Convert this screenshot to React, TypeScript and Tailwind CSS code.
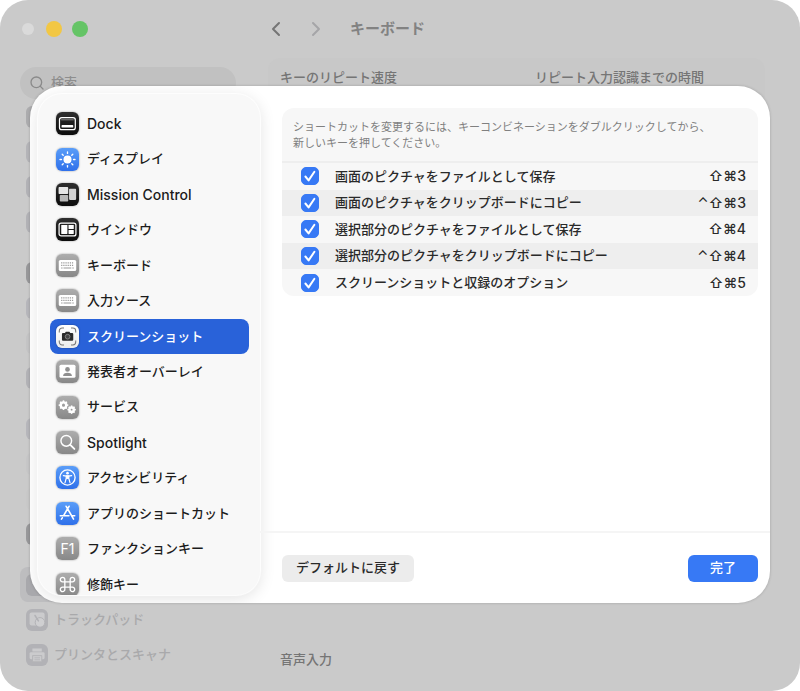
import type { ReactNode } from 'react';
import { LuChevronLeft, LuChevronRight, LuSearch } from 'react-icons/lu';

const TILE = {
  black: 'bg-linear-to-b from-[#2e2e2e] to-[#0c0c0c]',
  blue: 'bg-linear-to-b from-[#5a9df8] to-[#2f70ea]',
  gray: 'bg-linear-to-b from-[#adadad] to-[#888888]',
  white: 'bg-linear-to-b from-white to-[#ececec]',
};

const DockIcon = () => (
  <>
    <rect x="3.4" y="5.4" width="15.4" height="11.8" rx="2.2" fill="none" stroke="#fff" strokeWidth="1.2" />
    <path d="M5 7.6h12.2" stroke="#fff" strokeWidth="0.7" opacity="0.6" />
    <rect x="5.4" y="12.6" width="11.4" height="2.6" rx="0.7" fill="#fff" />
  </>
);

const SunIcon = () => (
  <>
    <circle cx="11.2" cy="11.2" r="3.9" fill="#fff" />
    {[0, 45, 90, 135, 180, 225, 270, 315].map((deg) => (
      <path key={deg} d="M11.2 5.3V3.9" stroke="#fff" strokeWidth="1.3" strokeLinecap="round" transform={`rotate(${deg} 11.2 11.2)`} />
    ))}
  </>
);

const MissionIcon = () => (
  <>
    <rect x="2.5" y="4" width="9.4" height="6.8" rx="0.8" fill="#e6e6e6" />
    <rect x="3.7" y="11.7" width="8.2" height="6.4" rx="0.8" fill="#b8b8b8" />
    <rect x="12.7" y="5.7" width="6.9" height="10.8" rx="0.8" fill="#d2d2d2" />
  </>
);

const WindowIcon = () => (
  <>
    <rect x="3" y="4.9" width="16.4" height="12.6" rx="2" fill="none" stroke="#fff" strokeWidth="1.2" />
    <rect x="5.1" y="6.9" width="6" height="8.6" rx="0.3" fill="#fff" />
    <rect x="12.2" y="6.9" width="5.1" height="3.8" rx="0.3" fill="#fff" />
    <rect x="12.2" y="11.7" width="5.1" height="3.8" rx="0.3" fill="#fff" />
  </>
);

const KeyboardIcon = () => (
  <>
    <rect x="2.7" y="5.8" width="17" height="10.8" rx="1.6" fill="#fff" />
    <path d="M5 8.6h12.4M5 11h12.4" stroke="#999" strokeWidth="1.2" strokeDasharray="1.2 0.9" />
    <path d="M5 13.6h1.4M7.3 13.6h7.6M15.9 13.6h1.4" stroke="#999" strokeWidth="1.1" />
  </>
);

const ScreenshotIcon = () => (
  <>
    <path
      d="M3.2 7.4V5.8a2.8 2.8 0 0 1 2.8-2.8h1.8M14.6 3h1.8a2.8 2.8 0 0 1 2.8 2.8v1.6M19.2 15v1.6a2.8 2.8 0 0 1-2.8 2.8h-1.8M7.8 19.4H6a2.8 2.8 0 0 1-2.8-2.8V15"
      fill="none"
      stroke="#777"
      strokeWidth="1"
    />
    <path d="M6.8 7.8h1.9l.9-1.3h3.4l.9 1.3h1.9a1 1 0 0 1 1 1v5.5a1 1 0 0 1-1 1h-9a1 1 0 0 1-1-1V8.8a1 1 0 0 1 1-1z" fill="#2a2a2a" />
    <circle cx="11.3" cy="11.4" r="2.3" fill="#444" stroke="#999" strokeWidth="0.7" />
  </>
);

const PresenterIcon = () => (
  <>
    <rect x="3.4" y="4.6" width="15.6" height="12.8" rx="1.6" fill="#fff" />
    <circle cx="11.2" cy="9.2" r="2.3" fill="#8f8f8f" />
    <path d="M6.9 15.6c0-2.2 1.8-3.2 4.3-3.2s4.3 1 4.3 3.2z" fill="#8f8f8f" />
  </>
);

const Gear = ({ cx, cy, r }: { cx: number; cy: number; r: number }) => (
  <>
    <circle cx={cx} cy={cy} r={r} fill="none" stroke="#fff" strokeWidth="2.4" />
    {[0, 45, 90, 135, 180, 225, 270, 315].map((deg) => (
      <path key={deg} d={`M${cx} ${cy - r}v-2`} stroke="#fff" strokeWidth="1.5" transform={`rotate(${deg} ${cx} ${cy})`} />
    ))}
  </>
);

const ServicesIcon = () => (
  <>
    <Gear cx={7.3} cy={8.9} r={2.7} />
    <Gear cx={15.2} cy={13.3} r={2.1} />
  </>
);

const SpotlightIcon = () => (
  <>
    <circle cx="10" cy="9.6" r="5.2" fill="none" stroke="#fff" strokeWidth="1.4" />
    <path d="M13.9 13.5l4 4" stroke="#fff" strokeWidth="1.8" strokeLinecap="round" />
  </>
);

const AccessIcon = () => (
  <>
    <circle cx="11.2" cy="11.2" r="7.4" fill="none" stroke="#fff" strokeWidth="1.3" />
    <circle cx="11.2" cy="7" r="1.3" fill="#fff" />
    <path d="M7.2 9.4l3 .5h2l3-.5" fill="none" stroke="#fff" strokeWidth="1.2" strokeLinecap="round" />
    <path d="M9.9 9.6h2.6v2.6l1.2 4.2M9.9 9.6v2.6l-1.2 4.2" fill="none" stroke="#fff" strokeWidth="1.1" strokeLinecap="round" strokeLinejoin="round" />
    <path d="M9.9 9.6h2.6v3H9.9z" fill="#fff" />
  </>
);

const AppStoreIcon = () => (
  <path
    d="M12.7 4.2L7.4 13.2M9.9 4.2l7.2 12.4M4.2 13.4h8.4M15.4 13.4h2.8M6.1 15.4l-.8 1.3"
    fill="none"
    stroke="#fff"
    strokeWidth="1.6"
    strokeLinecap="round"
  />
);

const CommandIcon = () => (
  <path
    d="M8.6 8.6H6.5a2.2 2.2 0 1 1 2.1-2.1v9.3a2.2 2.2 0 1 1-2.1-2.1h9.4a2.2 2.2 0 1 1-2.1 2.1V6.5a2.2 2.2 0 1 1 2.1 2.1z"
    fill="none"
    stroke="#fff"
    strokeWidth="1.3"
  />
);

const TrackpadIcon = () => (
  <>
    <rect x="3.6" y="3.6" width="15" height="13" rx="2" fill="#cbcbcd" />
    <circle cx="14" cy="13.4" r="4.8" fill="#cfcfd1" stroke="#b2b2b6" strokeWidth="1" />
    <path d="M9 6.5l3.4 5.4" stroke="#b2b2b6" strokeWidth="1.5" strokeLinecap="round" />
  </>
);

const PrinterIcon = () => (
  <>
    <path d="M6.4 4.6h9.4v3H6.4z" fill="#cbcbcd" />
    <rect x="3.6" y="8.2" width="15" height="7" rx="1.4" fill="#cbcbcd" />
    <path d="M6.6 11.6h9.2v6.2H6.6z" fill="#cbcbcd" stroke="#b2b2b6" strokeWidth="0.9" />
    <path d="M8.4 13.8h5.6M8.4 15.8h5.6" stroke="#b2b2b6" strokeWidth="0.8" />
  </>
);

const CATEGORIES: { name: string; tile: string; icon: ReactNode }[] = [
  { name: 'Dock', tile: TILE.black, icon: <DockIcon /> },
  { name: 'ディスプレイ', tile: TILE.blue, icon: <SunIcon /> },
  { name: 'Mission Control', tile: TILE.black, icon: <MissionIcon /> },
  { name: 'ウインドウ', tile: TILE.black, icon: <WindowIcon /> },
  { name: 'キーボード', tile: TILE.gray, icon: <KeyboardIcon /> },
  { name: '入力ソース', tile: TILE.gray, icon: <KeyboardIcon /> },
  { name: 'スクリーンショット', tile: TILE.white, icon: <ScreenshotIcon /> },
  { name: '発表者オーバーレイ', tile: TILE.gray, icon: <PresenterIcon /> },
  { name: 'サービス', tile: TILE.gray, icon: <ServicesIcon /> },
  { name: 'Spotlight', tile: TILE.gray, icon: <SpotlightIcon /> },
  { name: 'アクセシビリティ', tile: TILE.blue, icon: <AccessIcon /> },
  { name: 'アプリのショートカット', tile: TILE.blue, icon: <AppStoreIcon /> },
  { name: 'ファンクションキー', tile: TILE.gray, icon: null },
  { name: '修飾キー', tile: TILE.gray, icon: <CommandIcon /> },
];

const SHORTCUTS = [
  { id: 'save-screen', label: '画面のピクチャをファイルとして保存', keys: '⇧⌘3' },
  { id: 'copy-screen', label: '画面のピクチャをクリップボードにコピー', keys: '⌃⇧⌘3' },
  { id: 'save-area', label: '選択部分のピクチャをファイルとして保存', keys: '⇧⌘4' },
  { id: 'copy-area', label: '選択部分のピクチャをクリップボードにコピー', keys: '⌃⇧⌘4' },
  { id: 'options', label: 'スクリーンショットと収録のオプション', keys: '⇧⌘5' },
];

// dimmed icon tiles of the settings groups that sit under the dialog
const DIMMED_GROUPS = [
  ['bg-[#acacae]', 'bg-[#b4b4b8]', 'bg-[#b2b2b6]', 'bg-[#b2b2b6]'],
  ['bg-[#98989a]', 'bg-[#b6b6bb]', 'bg-[#c4c4c5]', 'bg-[#b2b2b6]'],
  ['bg-[#b6b6bb]', 'bg-[#c6c6c7]', 'bg-[#c8c8c8]', 'bg-[#98989a]'],
];

function SettingsSidebar() {
  return (
    <aside className="flex w-64 shrink-0 flex-col px-5 pt-[21px]">
      <div className="flex gap-[10px]">
        <span className="flex size-4 items-center justify-center">
          <span className="size-3 rounded-full bg-[#dadada]" />
        </span>
        <span className="size-4 rounded-full bg-[#f2c744]" />
        <span className="size-4 rounded-full bg-[#65c466]" />
      </div>
      <label className="mt-[30px] flex h-8 items-center gap-[6px] rounded-full bg-[#c1c1c1] px-[9px] text-[#8a8a8a]">
        <LuSearch className="size-4 shrink-0" />
        <input type="text" placeholder="検索" aria-label="検索" className="w-full bg-transparent text-[13px] font-medium outline-none placeholder:text-[#8e8e8e]" />
      </label>
      <div className="flex flex-col gap-4 text-[13px] font-medium text-[#a9a9ab]">
        {DIMMED_GROUPS.map((group, g) => (
          <div key={g} aria-hidden="true">
            {group.map((color, i) => (
              <div key={i} className="flex h-[35px] items-center px-[6px]">
                <span className={`size-[22px] rounded-md ${color}`} />
              </div>
            ))}
          </div>
        ))}
        <nav>
          <div className="flex h-[35px] items-center rounded-lg bg-[#bdbdbf] px-[6px]">
            <span className="size-[22px] rounded-md bg-[#a8a8ac]" />
          </div>
          <a href="#trackpad" className="flex h-[35px] items-center gap-[6px] px-[6px]">
            <svg viewBox="0 0 22 22" className="size-[22px] rounded-md bg-[#b2b2b6]">
              <TrackpadIcon />
            </svg>
            トラックパッド
          </a>
          <a href="#printers" className="flex h-[35px] items-center gap-[6px] px-[6px]">
            <svg viewBox="0 0 22 22" className="size-[22px] rounded-md bg-[#b2b2b6]">
              <PrinterIcon />
            </svg>
            プリンタとスキャナ
          </a>
        </nav>
      </div>
    </aside>
  );
}

function KeyboardPane() {
  return (
    <section className="flex min-w-0 flex-1 flex-col justify-between pb-[22px]">
      <div>
        <header className="flex h-[58px] items-center">
          <div className="flex items-center gap-4 pl-2">
            <button aria-label="戻る" className="text-[#757575]">
              <LuChevronLeft className="size-6" />
            </button>
            <button aria-label="進む" className="text-[#a5a5a8]">
              <LuChevronRight className="size-6" />
            </button>
          </div>
          <h1 className="pl-[22px] text-[15px] font-bold text-[#828282]">キーボード</h1>
        </header>
        <div className="mr-[35px] ml-3 flex rounded-t-xl bg-[#c8c8c8] px-3 text-[13px] font-medium text-[#757575]">
          <span className="flex h-10 w-[255px] items-center">キーのリピート速度</span>
          <span className="flex h-10 items-center">リピート入力認識までの時間</span>
        </div>
      </div>
      <h2 className="pl-6 text-[13px] font-medium text-[#757575]">音声入力</h2>
    </section>
  );
}

function CategoryList() {
  return (
    <nav className="my-2 ml-2 h-[501px] w-[222px] shrink-0 overflow-hidden rounded-[24px] bg-[#f8f8f8] pt-3 pr-[11px] pl-3 shadow-[0_0_1px_1px_rgba(255,255,255,0.9),0_3px_16px_rgba(0,0,0,0.12)]">
      <ul className="grid h-[496px] auto-rows-fr">
        {CATEGORIES.map((c) => {
          const selected = c.name === 'スクリーンショット';
          const latin = c.name === 'Dock' || c.name === 'Mission Control' || c.name === 'Spotlight';
          return (
            <li key={c.name}>
              <button
                className={`flex h-full w-full items-center gap-2 rounded-lg px-[6px] font-medium ${latin ? 'text-sm' : 'text-[13px]'} ${
                  selected ? 'bg-[#2962d9] text-white' : 'text-[#1c1c1c]'
                }`}
              >
                <span className={`flex size-[23px] shrink-0 items-center justify-center rounded-md shadow-[0_0_2px_rgba(0,0,0,0.4)] ${c.tile}`}>
                  {c.icon ? (
                    <svg viewBox="0 0 22.4 22.4" className="size-full">
                      {c.icon}
                    </svg>
                  ) : (
                    <span className="text-sm font-normal text-white">F1</span>
                  )}
                </span>
                {c.name}
              </button>
            </li>
          );
        })}
      </ul>
    </nav>
  );
}

function ShortcutTable() {
  return (
    <div className="overflow-hidden rounded-xl bg-[#f7f7f7]">
      <p className="border-b-2 border-[#eeeeee] px-[11px] pt-[11px] pb-[10px] text-[11px] leading-4 text-[#808080]">
        ショートカットを変更するには、キーコンビネーションをダブルクリックしてから、
        <br />
        新しいキーを押してください。
      </p>
      <table className="h-[133px] w-full text-[13px] font-medium text-[#2a2a2a]">
        <tbody>
          {SHORTCUTS.map((s) => (
            <tr key={s.id} className="even:bg-[#eeeeee]">
              <td className="w-[53px] p-0 pl-[19px]">
                <span className="grid size-[18px] place-items-center">
                  <input
                    id={s.id}
                    type="checkbox"
                    defaultChecked
                    className="peer col-start-1 row-start-1 size-[18px] appearance-none rounded-[5px] border border-[#c4c4c4] bg-white checked:border-[#3779f5] checked:bg-[#3779f5]"
                  />
                  <svg viewBox="0 0 18 18" className="pointer-events-none col-start-1 row-start-1 hidden size-[18px] peer-checked:block">
                    <path d="M4.4 9.5l3.2 3.9 5.8-8.6" fill="none" stroke="#fff" strokeWidth="2" strokeLinecap="round" strokeLinejoin="round" />
                  </svg>
                </span>
              </td>
              <td className="p-0">
                <label htmlFor={s.id}>{s.label}</label>
              </td>
              <td className="p-0 pr-3 text-right text-sm">{s.keys}</td>
            </tr>
          ))}
        </tbody>
      </table>
    </div>
  );
}

function ShortcutsDialog() {
  return (
    <div role="dialog" aria-label="キーボードショートカット" className="absolute inset-x-[30px] top-[86px] flex overflow-hidden rounded-[32px] bg-white shadow-[0_0_3px_rgba(0,0,0,0.2)]">
      <CategoryList />
      <div className="flex min-w-0 flex-1 flex-col justify-between">
        <div className="pt-[22px] pr-3 pl-[22px]">
          <ShortcutTable />
        </div>
        <footer className="flex h-[72px] items-center justify-between border-t-2 border-[#f5f5f5] pr-3 pl-[22px] text-[13px] font-medium">
          <button className="h-[27px] rounded-md bg-[#ececec] px-[14px] text-[#2a2a2a]">デフォルトに戻す</button>
          <button className="h-[27px] rounded-md bg-[#3779f5] px-[22px] text-white">完了</button>
        </footer>
      </div>
    </div>
  );
}

export default function App() {
  return (
    <main className="h-screen bg-white font-[Inter,'Noto_Sans_CJK_JP',sans-serif]">
      <div className="relative flex h-full overflow-hidden rounded-[28px] bg-[#cacaca]">
        <SettingsSidebar />
        <KeyboardPane />
        <ShortcutsDialog />
      </div>
    </main>
  );
}
